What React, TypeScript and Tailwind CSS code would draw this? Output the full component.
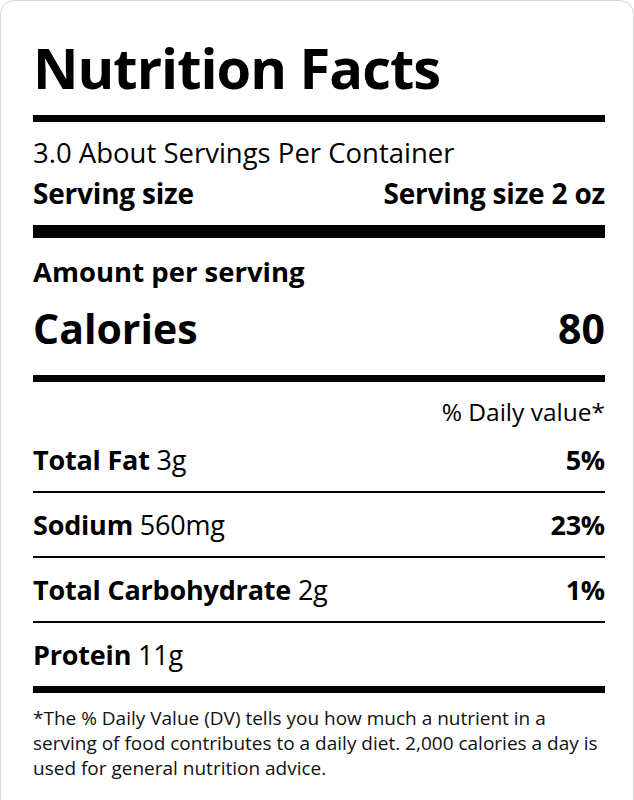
import React from 'react';

interface Nutrient {
  name: string;
  amount: string;
  dv?: string;
}

const nutrients: Nutrient[] = [
  { name: 'Total Fat', amount: '3g', dv: '5%' },
  { name: 'Sodium', amount: '560mg', dv: '23%' },
  { name: 'Total Carbohydrate', amount: '2g', dv: '1%' },
  { name: 'Protein', amount: '11g' },
];

export default function App() {
  return (
    <div className="min-h-screen bg-white text-black [font-family:'Open_Sans','Noto_Sans',sans-serif]">
      <div className="border border-[#d6d6d6] rounded-[14px] pl-[32px] pr-[28px] pt-[36px] pb-[40px]">
        <h1 className="text-[56px] leading-[60px] font-bold tracking-[-1px]">Nutrition Facts</h1>
        <div className="mt-[18px] h-[7px] bg-black" />

        <p className="mt-[11px] text-[27.5px] leading-[40px]">3.0 About Servings Per Container</p>
        <div className="flex justify-between text-[28px] leading-[40px] font-bold tracking-[-0.2px]">
          <span>Serving size</span>
          <span>Serving size 2 oz</span>
        </div>
        <div className="mt-[12px] h-[13px] bg-black" />

        {/* Calories */}
        <p className="mt-[16px] text-[27.5px] leading-[36px] font-bold">Amount per serving</p>
        <div className="mt-[10px] flex justify-between items-baseline text-[41px] leading-[56px] font-bold">
          <span>Calories</span>
          <span>80</span>
        </div>
        <div className="mt-[19px] h-[7px] bg-black" />

        <p className="mt-[14px] text-right text-[24.5px] leading-[32px]">% Daily value*</p>

        <div>
          {nutrients.map((n, i) => (
            <div
              key={n.name}
              className={
                i < nutrients.length - 1
                  ? 'flex justify-between pt-[14px] pb-[13px] leading-[36px] border-b-2 border-black text-[27px] tracking-[-0.2px]'
                  : 'flex justify-between pt-[14px] pb-[13px] leading-[36px] text-[27px] tracking-[-0.2px]'
              }
            >
              <span>
                <span className="font-bold">{n.name}</span> {n.amount}
              </span>
              {n.dv && <span className="font-bold">{n.dv}</span>}
            </div>
          ))}
        </div>
        <div className="h-[7px] bg-black" />

        <p className="mt-[13px] text-[19px] leading-[25px] text-[#111]">
          *The % Daily Value (DV) tells you how much a nutrient in a serving of food contributes to a daily diet. 2,000 calories a day is used for general nutrition advice.
        </p>
      </div>
    </div>
  );
}
